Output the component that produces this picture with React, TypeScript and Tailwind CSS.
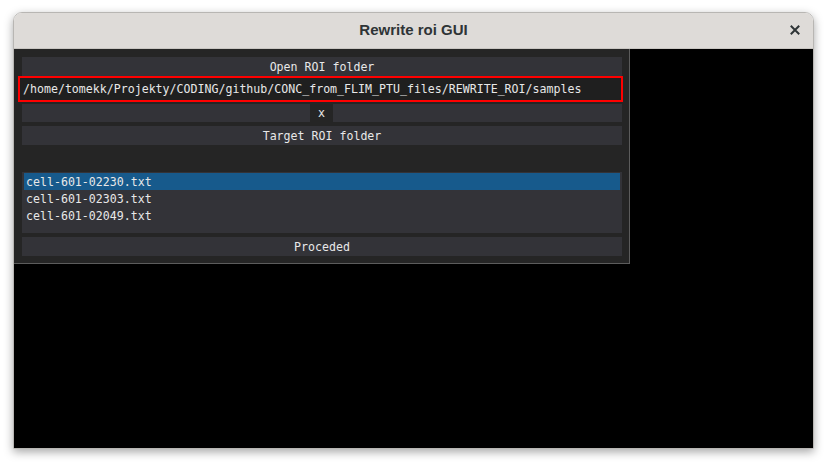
import React from 'react';

const files = ['cell-601-02230.txt', 'cell-601-02303.txt', 'cell-601-02049.txt'];

const mono = "font-['DejaVu_Sans_Mono',monospace] text-[11.6px] text-[#e8e8e8] pt-[2px]";

const App: React.FC = () => {
  return (
    <div className="w-[828px] h-[466px] bg-white pt-[12px] pl-[13px]">
      {/* Window frame */}
      <div className="w-[801px] h-[437px] flex flex-col rounded-t-[9px] overflow-hidden border border-[#b8b6b3] shadow-[0_3px_10px_rgba(0,0,0,0.35)]">
        {/* Title bar */}
        <div className="h-[36px] shrink-0 bg-[#dedbd8] border-b border-[#c9c6c2] flex items-center relative">
          <div className="flex-1 text-center font-['Liberation_Sans',sans-serif] font-bold text-[15px] text-[#2e3436]">
            Rewrite roi GUI
          </div>
          <button className="absolute right-[10px] top-[9px] w-[16px] h-[16px] flex items-center justify-center">
            <svg width="10" height="10" viewBox="0 0 10 10">
              <path d="M1.5 1.5 L8.5 8.5 M8.5 1.5 L1.5 8.5" stroke="#2e3436" strokeWidth="2" strokeLinecap="square" />
            </svg>
          </button>
        </div>

        {/* Render area */}
        <div className="flex-1 bg-black">
          {/* ImGui window */}
          <div className="w-[616px] bg-[#252525] border-r border-b border-[#5c5c5c] pl-[8px] pr-[7px] pt-[8px] pb-[7px] flex flex-col">
            <div className={`h-[19px] bg-[#333338] flex items-center justify-center ${mono}`}>Open ROI folder</div>

            <div className="h-[26px] -ml-[4px] w-[605px] border-2 border-[#ff0000] bg-[#1f1f1f] flex items-center pl-[3px]">
              <span className={mono}>/home/tomekk/Projekty/CODING/github/CONC_from_FLIM_PTU_files/REWRITE_ROI/samples</span>
            </div>

            <div className="h-[18px] mt-[2px] flex">
              <div className="w-[288px] bg-[#333338]" />
              <div className={`w-[23px] flex items-center justify-center ${mono}`}>x</div>
              <div className="flex-1 bg-[#333338]" />
            </div>

            <div className={`h-[19px] mt-[4px] bg-[#333338] flex items-center justify-center ${mono}`}>Target ROI folder</div>

            <div className="h-[61px] mt-[27px] bg-[#333338] p-[1px] pl-[2px] pr-[2px] flex flex-col">
              {files.map((f, i) => (
                <div
                  key={f}
                  className={`h-[17px] flex items-center pl-[2px] ${mono} ${i === 0 ? 'bg-[#175a8c]' : ''}`}
                >
                  {f}
                </div>
              ))}
            </div>

            <div className={`h-[19px] mt-[4px] bg-[#333338] flex items-center justify-center ${mono}`}>Proceded</div>
          </div>
        </div>
      </div>
    </div>
  );
};

export default App;
